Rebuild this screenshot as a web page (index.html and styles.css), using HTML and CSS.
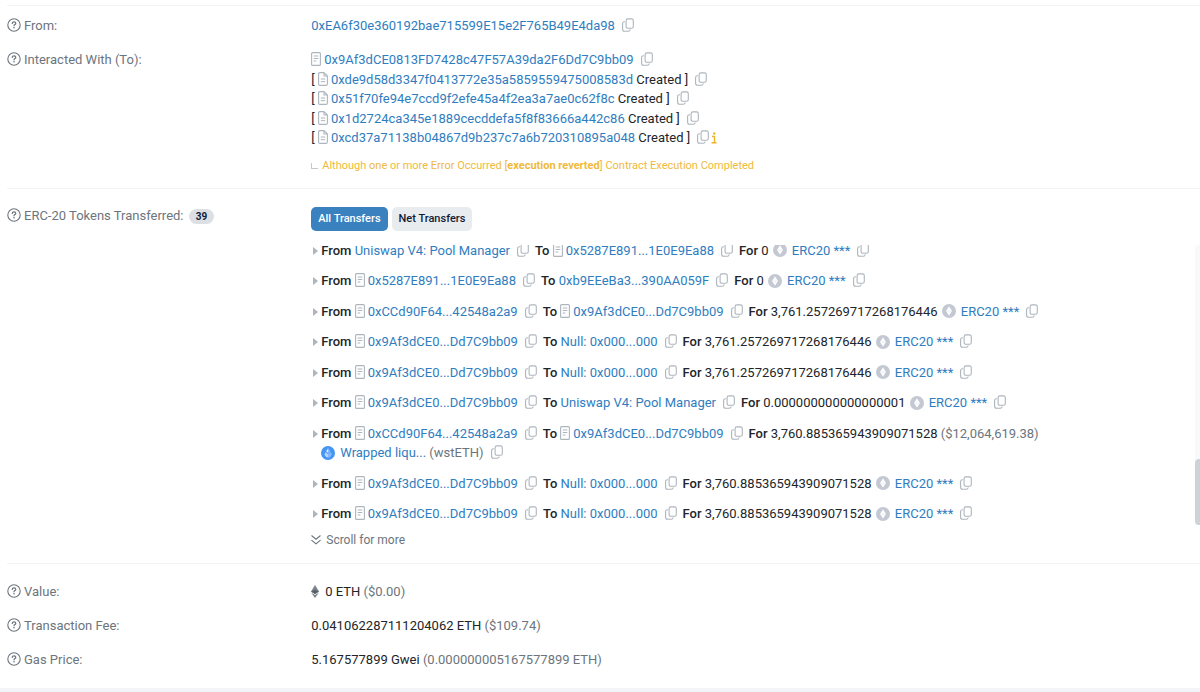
FILE: index.html
```html
<!DOCTYPE html>
<html lang="en">
<head>
<meta charset="utf-8">
<meta name="viewport" content="width=device-width, initial-scale=1">
<title>Transaction Details</title>
<link rel="stylesheet" href="styles.css">
</head>
<body>
<svg class="sprite" aria-hidden="true">
  <symbol id="help" viewBox="0 0 14 14"><circle cx="7" cy="7" r="6.2" fill="none" stroke="currentColor" stroke-width="1.1"/><path d="M5.2 5.5c.1-1.1.8-1.6 1.8-1.6s1.8.6 1.8 1.5c0 1.2-1.8 1.2-1.8 2.4" fill="none" stroke="currentColor" stroke-width="1.2" stroke-linecap="round"/><circle cx="7" cy="9.8" r=".8" fill="currentColor"/></symbol>
  <symbol id="copy" viewBox="0 0 12 14"><rect x="4.1" y=".9" width="7.2" height="9.4" rx="1.8" fill="none" stroke="currentColor" stroke-width="1.1"/><path d="M2.6 3.8c-1.2 0-2 .7-2 1.8v5.6c0 1.3.8 2 2 2h3.6c1.1 0 1.8-.6 1.9-1.5" fill="none" stroke="currentColor" stroke-width="1.1" stroke-linecap="round"/></symbol>
  <symbol id="doc" viewBox="0 0 10 14"><rect x=".6" y=".6" width="8.8" height="12.8" rx="1" fill="none" stroke="currentColor" stroke-width="1.1"/><path d="M2.7 4h4.6M2.7 6.500h4.6M2.7 9h2.6" fill="none" stroke="currentColor"/></symbol>
  <symbol id="file" viewBox="0 0 10 14"><path d="M6 .6H2Q.6.6.6 2v10q0 1.400 1.400 1.400h6q1.400 0 1.400-1.400V4zM6 .6V4h3.400" fill="none" stroke="currentColor" stroke-width="1.100" stroke-linejoin="round"/><path d="M2.800 7h4.400M2.800 9.700h4.400" fill="none" stroke="currentColor"/></symbol>
  <symbol id="token" viewBox="0 0 14 14"><circle cx="7" cy="7" r="7" fill="#c3c8d2"/><path d="M7 2.200 9.900 7 7 11.800 4.100 7z" fill="#fff"/><path d="M7 5.900 9.900 7 7 8.600 4.100 7z" fill="#f1f3f6"/></symbol>
  <symbol id="wsteth" viewBox="0 0 14 14"><circle cx="7" cy="7" r="7" fill="#4595f7"/><path d="M7 2.200 9 5.500 7 6.700 5 5.500z" fill="#d7e9ff"/><path d="M4.400 6.300 7 7.900l2.600-1.600c1.100 1.700.9 3-.1 4a3.500 3.500 0 0 1-5 0c-1-1-1.200-2.300-.1-4z" fill="#b3d4fe"/><path d="M7 2.200v4.500l2-1.200zM7 7.900v3.500a3.500 3.500 0 0 0 2.500-1.100c1-1 1.200-2.300.1-4z" fill="#82b8fd"/></symbol>
  <symbol id="eth" viewBox="0 0 8 13"><path d="M4 0 8 6.600 4 9 0 6.600z" fill="#7b848c"/><path d="M4 4.800 8 6.600 4 9 0 6.600z" fill="#596168"/><path d="M0 7.500 4 9.900 8 7.500 4 13z" fill="#7b848c"/></symbol>
</svg>

<main class="details">
  <section class="group group-parties">
    <div class="row">
      <div class="label"><svg class="help"><use href="#help"/></svg>From:</div>
      <div class="value"><a href="#">0xEA6f30e360192bae715599E15e2F765B49E4da98</a><button class="copy" aria-label="Copy"><svg><use href="#copy"/></svg></button></div>
    </div>
    <div class="row">
      <div class="label"><svg class="help"><use href="#help"/></svg>Interacted With (To):</div>
      <div class="value contracts">
        <div><svg class="doc"><use href="#doc"/></svg><a href="#">0x9Af3dCE0813FD7428c47F57A39da2F6Dd7C9bb09</a><button class="copy" aria-label="Copy"><svg><use href="#copy"/></svg></button></div>
        <div>[ <svg class="doc"><use href="#file"/></svg><a href="#">0xde9d58d3347f0413772e35a5859559475008583d</a> Created ]<button class="copy" aria-label="Copy"><svg><use href="#copy"/></svg></button></div>
        <div>[ <svg class="doc"><use href="#file"/></svg><a href="#">0x51f70fe94e7ccd9f2efe45a4f2ea3a7ae0c62f8c</a> Created ]<button class="copy" aria-label="Copy"><svg><use href="#copy"/></svg></button></div>
        <div>[ <svg class="doc"><use href="#file"/></svg><a href="#">0x1d2724ca345e1889cecddefa5f8f83666a442c86</a> Created ]<button class="copy" aria-label="Copy"><svg><use href="#copy"/></svg></button></div>
        <div>[ <svg class="doc"><use href="#file"/></svg><a href="#">0xcd37a71138b04867d9b237c7a6b720310895a048</a> Created ]<button class="copy copy-tight" aria-label="Copy"><svg><use href="#copy"/></svg></button><svg class="info" viewBox="0 0 6 12"><path d="M1 4.500h2.500v6M.5 10.800h5" fill="none" stroke="currentColor" stroke-width="1.400"/><circle cx="3.200" cy="1.500" r="1.200" fill="currentColor"/></svg></div>
        <p class="notice"><span class="elbow"></span>Although one or more Error Occurred [<strong>execution reverted</strong>] Contract Execution Completed</p>
      </div>
    </div>
  </section>

  <section class="group group-tokens">
    <div class="row">
      <div class="label"><svg class="help"><use href="#help"/></svg>ERC-20 Tokens Transferred: <span class="badge">39</span></div>
      <div class="value">
        <div class="tabs"><button class="tab tab-active">All Transfers</button><button class="tab">Net Transfers</button></div>
        <div class="scroller">
          <ul class="transfers">
            <li><b>From</b> <a href="#">Uniswap V4: Pool Manager</a><button class="copy" aria-label="Copy"><svg><use href="#copy"/></svg></button><b>To</b> <svg class="doc"><use href="#doc"/></svg><a href="#">0x5287E891...1E0E9Ea88</a><button class="copy" aria-label="Copy"><svg><use href="#copy"/></svg></button><b>For</b> 0 <svg class="token"><use href="#token"/></svg><a href="#">ERC20 ***</a><button class="copy" aria-label="Copy"><svg><use href="#copy"/></svg></button></li>
            <li><b>From</b> <svg class="doc"><use href="#doc"/></svg><a href="#">0x5287E891...1E0E9Ea88</a><button class="copy" aria-label="Copy"><svg><use href="#copy"/></svg></button><b>To</b> <a href="#">0xb9EEeBa3...390AA059F</a><button class="copy" aria-label="Copy"><svg><use href="#copy"/></svg></button><b>For</b> 0 <svg class="token"><use href="#token"/></svg><a href="#">ERC20 ***</a><button class="copy" aria-label="Copy"><svg><use href="#copy"/></svg></button></li>
            <li><b>From</b> <svg class="doc"><use href="#doc"/></svg><a href="#">0xCCd90F64...42548a2a9</a><button class="copy" aria-label="Copy"><svg><use href="#copy"/></svg></button><b>To</b> <svg class="doc"><use href="#doc"/></svg><a href="#">0x9Af3dCE0...Dd7C9bb09</a><button class="copy" aria-label="Copy"><svg><use href="#copy"/></svg></button><b>For</b> 3,761.257269717268176446 <svg class="token"><use href="#token"/></svg><a href="#">ERC20 ***</a><button class="copy" aria-label="Copy"><svg><use href="#copy"/></svg></button></li>
            <li><b>From</b> <svg class="doc"><use href="#doc"/></svg><a href="#">0x9Af3dCE0...Dd7C9bb09</a><button class="copy" aria-label="Copy"><svg><use href="#copy"/></svg></button><b>To</b> <a href="#">Null: 0x000...000</a><button class="copy" aria-label="Copy"><svg><use href="#copy"/></svg></button><b>For</b> 3,761.257269717268176446 <svg class="token"><use href="#token"/></svg><a href="#">ERC20 ***</a><button class="copy" aria-label="Copy"><svg><use href="#copy"/></svg></button></li>
            <li><b>From</b> <svg class="doc"><use href="#doc"/></svg><a href="#">0x9Af3dCE0...Dd7C9bb09</a><button class="copy" aria-label="Copy"><svg><use href="#copy"/></svg></button><b>To</b> <a href="#">Null: 0x000...000</a><button class="copy" aria-label="Copy"><svg><use href="#copy"/></svg></button><b>For</b> 3,761.257269717268176446 <svg class="token"><use href="#token"/></svg><a href="#">ERC20 ***</a><button class="copy" aria-label="Copy"><svg><use href="#copy"/></svg></button></li>
            <li><b>From</b> <svg class="doc"><use href="#doc"/></svg><a href="#">0x9Af3dCE0...Dd7C9bb09</a><button class="copy" aria-label="Copy"><svg><use href="#copy"/></svg></button><b>To</b> <a href="#">Uniswap V4: Pool Manager</a><button class="copy" aria-label="Copy"><svg><use href="#copy"/></svg></button><b>For</b> 0.000000000000000001 <svg class="token"><use href="#token"/></svg><a href="#">ERC20 ***</a><button class="copy" aria-label="Copy"><svg><use href="#copy"/></svg></button></li>
            <li><b>From</b> <svg class="doc"><use href="#doc"/></svg><a href="#">0xCCd90F64...42548a2a9</a><button class="copy" aria-label="Copy"><svg><use href="#copy"/></svg></button><b>To</b> <svg class="doc"><use href="#doc"/></svg><a href="#">0x9Af3dCE0...Dd7C9bb09</a><button class="copy" aria-label="Copy"><svg><use href="#copy"/></svg></button><b>For</b> 3,760.885365943909071528 <span class="muted">($12,064,619.38)</span><br><svg class="token token-leading"><use href="#wsteth"/></svg><a href="#">Wrapped liqu...</a> <span class="muted">(wstETH)</span><button class="copy" aria-label="Copy"><svg><use href="#copy"/></svg></button></li>
            <li><b>From</b> <svg class="doc"><use href="#doc"/></svg><a href="#">0x9Af3dCE0...Dd7C9bb09</a><button class="copy" aria-label="Copy"><svg><use href="#copy"/></svg></button><b>To</b> <a href="#">Null: 0x000...000</a><button class="copy" aria-label="Copy"><svg><use href="#copy"/></svg></button><b>For</b> 3,760.885365943909071528 <svg class="token"><use href="#token"/></svg><a href="#">ERC20 ***</a><button class="copy" aria-label="Copy"><svg><use href="#copy"/></svg></button></li>
            <li><b>From</b> <svg class="doc"><use href="#doc"/></svg><a href="#">0x9Af3dCE0...Dd7C9bb09</a><button class="copy" aria-label="Copy"><svg><use href="#copy"/></svg></button><b>To</b> <a href="#">Null: 0x000...000</a><button class="copy" aria-label="Copy"><svg><use href="#copy"/></svg></button><b>For</b> 3,760.885365943909071528 <svg class="token"><use href="#token"/></svg><a href="#">ERC20 ***</a><button class="copy" aria-label="Copy"><svg><use href="#copy"/></svg></button></li>
          </ul>
          <div class="track"><div class="thumb"></div></div>
        </div>
        <div class="more"><svg class="chevrons" viewBox="0 0 10 10"><path d="M.8.8 5 4.200 9.200.8M.8 5.300 5 8.900l4.200-3.600" fill="none" stroke="currentColor" stroke-width="1.100" stroke-linecap="round" stroke-linejoin="round"/></svg>Scroll for more</div>
      </div>
    </div>
  </section>

  <section class="group group-cost">
    <div class="row">
      <div class="label"><svg class="help"><use href="#help"/></svg>Value:</div>
      <div class="value"><svg class="eth"><use href="#eth"/></svg>0 ETH <span class="muted">($0.00)</span></div>
    </div>
    <div class="row">
      <div class="label"><svg class="help"><use href="#help"/></svg>Transaction Fee:</div>
      <div class="value">0.041062287111204062 ETH <span class="muted">($109.74)</span></div>
    </div>
    <div class="row">
      <div class="label"><svg class="help"><use href="#help"/></svg>Gas Price:</div>
      <div class="value">5.167577899 Gwei <span class="muted">(0.000000005167577899 ETH)</span></div>
    </div>
  </section>
</main>
<div class="page-edge"></div>
</body>
</html>
```
FILE: styles.css
```css
* { box-sizing: border-box; }

body {
  margin: 0;
  background: #fff;
  color: #212529;
  font-family: Roboto, "Liberation Sans", sans-serif;
  font-size: 13px;
  line-height: 20px;
}

a { color: #2f7dbf; text-decoration: none; }
a:hover { color: #1c5f9a; }
button { font: inherit; border: 0; cursor: pointer; }
b { font-weight: 500; }
p { margin: 0; }
svg { vertical-align: middle; }

.sprite { display: none; }

.details { padding: 5px 0 0 7px; }

.group {
  display: grid;
  gap: 14px;
  border-top: 1px solid #f3f4f6;
}
.group-parties { padding: 10px 0 12px; }
.group-tokens { padding: 17px 0 13px; }
.group-cost { padding: 18px 0; }

.row {
  display: grid;
  grid-template-columns: minmax(0, 1fr) minmax(0, 3fr);
  column-gap: 8px;
}

.label, .muted { color: #6c757d; }

.help { width: 14px; height: 14px; margin: -3px 3px 0 0; }

.badge {
  display: inline-block;
  margin-left: 2px;
  padding: 0 7px;
  border-radius: 8px;
  background: #dcdfe3;
  color: #111b36;
  font-size: 10px;
  font-weight: 700;
  line-height: 15px;
}

.copy {
  padding: 0;
  margin: -3px 6px 0 7px;
  background: none;
  color: #adb5bd;
  line-height: 0;
  vertical-align: middle;
}
.copy svg { width: 12px; height: 14px; }
.copy-tight { margin-right: 2px; }

.doc { width: 10px; height: 14px; margin: -3px 3px 0 0; color: #adb5bd; }
.info { width: 6px; height: 12px; margin-top: -2px; color: #f0b429; }

.contracts { line-height: 1.5; }
.notice { margin-top: 8px; color: #f0b93a; font-size: 11px; line-height: 20px; }
.elbow {
  display: inline-block;
  width: 7px;
  height: 6px;
  margin-right: 4px;
  border: solid #c3c8ce;
  border-width: 0 0 1px 1px;
  vertical-align: middle;
}

.tabs { display: flex; gap: 4px; padding-top: 1px; }
.tab {
  padding: 0 7px;
  border-radius: 5px;
  background: #e9ecef;
  color: #111b36;
  font-size: 11px;
  font-weight: 500;
  line-height: 24px;
}
.tab-active { background: #3981bf; color: #fff; }

.scroller {
  display: flex;
  justify-content: space-between;
  margin-top: 14px;
  overflow: hidden;
}

/* First transfer is scrolled partly under the top edge. */
.transfers {
  display: grid;
  gap: 11px;
  margin: -4px 0 0;
  padding: 0 0 1px;
  list-style: none;
  line-height: 1.5;
}
.transfers li { position: relative; padding-left: 10px; }
.transfers li::before {
  content: "";
  position: absolute;
  left: 2px;
  top: 6px;
  border: solid transparent;
  border-width: 4px 0 4px 5px;
  border-left-color: #adb5bd;
}

.token { width: 14px; height: 14px; margin: -2px 5px 0 1px; }
.token-leading { margin-left: 0; }

.track {
  display: flex;
  flex-direction: column;
  justify-content: flex-end;
  width: 5px;
  border-radius: 4px 0 0 0;
  background: #f8f9fb;
}
.thumb { height: 66px; border-radius: 4px 0 0 4px; background: #ced3d7; }

.more { margin-top: 5px; color: #6c757d; font-size: 12px; }
.chevrons { width: 10px; height: 10px; margin-right: 5px; }

.eth { width: 8px; height: 13px; margin: -2px 6px 0 0; }

.page-edge { height: 4px; background: #f3f4f7; }
```
